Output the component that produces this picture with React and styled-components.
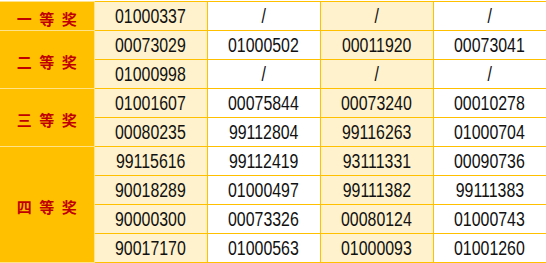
import React from 'react';
import styled, { createGlobalStyle } from 'styled-components';

const GlobalStyle = createGlobalStyle`
  html, body {
    margin: 0;
    padding: 0;
    background: #ffffff;
  }
`;

const Wrap = styled.div`
  width: 546px;
  padding-top: 1px;
`;

const Table = styled.table`
  width: 546px;
  border-collapse: collapse;
  table-layout: fixed;
`;

const Col = styled.col`
  width: ${p => (p.$head ? '94px' : '113px')};
`;

const Row = styled.tr`
  height: 29px;
`;

const Prize = styled.th`
  background: #ffc000;
  border: 1px solid #ffe38a;
  border-left: none;
  color: #c00000;
  font-family: "Noto Sans CJK SC", sans-serif;
  font-weight: 700;
  font-size: 15px;
  line-height: 1;
  letter-spacing: 2px;
  white-space: pre;
  padding: 4px 0 0 2px;
  text-align: center;
  vertical-align: middle;
`;

const Cell = styled.td`
  background: ${p => (p.$shade ? '#fff2cc' : '#ffffff')};
  border: 1px solid #ffc000;
  text-align: center;
  vertical-align: middle;
  padding: 2px 0 0 0;
  line-height: 1;
`;

const Num = styled.span`
  display: inline-block;
  font-family: "Liberation Sans", Arial, sans-serif;
  font-size: 19.5px;
  color: #111111;
  transform: scaleX(0.815);
  white-space: nowrap;
`;

const groups = [
  { label: '一 等 奖', rows: [['01000337', '/', '/', '/']] },
  {
    label: '二 等 奖',
    rows: [
      ['00073029', '01000502', '00011920', '00073041'],
      ['01000998', '/', '/', '/'],
    ],
  },
  {
    label: '三 等 奖',
    rows: [
      ['01001607', '00075844', '00073240', '00010278'],
      ['00080235', '99112804', '99116263', '01000704'],
    ],
  },
  {
    label: '四 等 奖',
    rows: [
      ['99115616', '99112419', '93111331', '00090736'],
      ['90018289', '01000497', '99111382', '99111383'],
      ['90000300', '00073326', '00080124', '01000743'],
      ['90017170', '01000563', '01000093', '01001260'],
    ],
  },
];

export default function App() {
  return (
    <Wrap>
      <GlobalStyle />
      <Table>
        <colgroup>
          <Col $head />
          <Col />
          <Col />
          <Col />
          <Col />
        </colgroup>
        <tbody>
          {groups.map(g =>
            g.rows.map((row, i) => (
              <Row key={g.label + i}>
                {i === 0 && <Prize rowSpan={g.rows.length}>{g.label}</Prize>}
                {row.map((v, c) => (
                  <Cell key={c} $shade={c % 2 === 0}>
                    <Num>{v}</Num>
                  </Cell>
                ))}
              </Row>
            ))
          )}
        </tbody>
      </Table>
    </Wrap>
  );
}
